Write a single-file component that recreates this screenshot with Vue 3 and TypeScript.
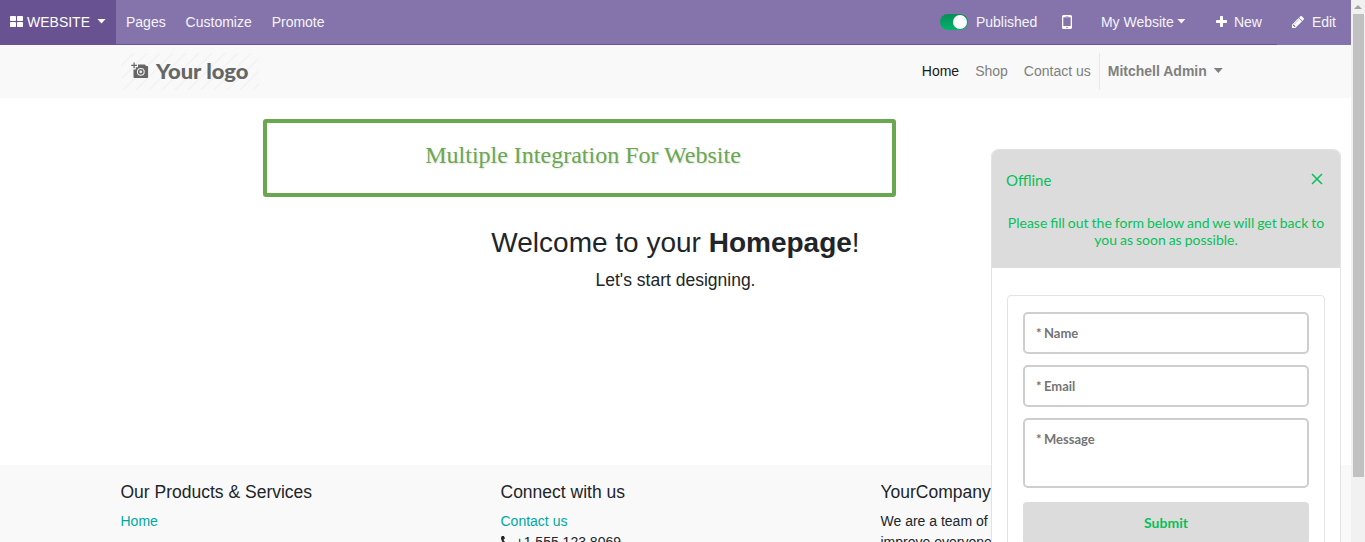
<script setup lang="ts">
const menu: string[] = ['Pages', 'Customize', 'Promote']
const fields: string[] = ['Name', 'Email']
</script>

<template>
  <div class="screen">
    <div class="page">
      <header class="topbar">
        <div class="brand">
          <svg class="grid-icon" viewBox="0 0 13 11"><rect width="6" height="5" rx=".8" /><rect x="7" width="6" height="5" rx=".8" /><rect y="6" width="6" height="5" rx=".8" /><rect x="7" y="6" width="6" height="5" rx=".8" /></svg>
          <span>WEBSITE</span><i class="caret"></i>
        </div>
        <a v-for="m in menu" :key="m" class="menu-item">{{ m }}</a>
        <div class="tools">
          <span class="switch"><i></i></span>
          <span class="published">Published</span>
          <svg class="mobile" viewBox="0 0 10 14"><path fill-rule="evenodd" d="M1.500 0h7Q10 0 10 1.500v11Q10 14 8.500 14h-7Q0 14 0 12.500v-11Q0 0 1.500 0zM1.300 2.300v8.700h7.400V2.300zM3.500 1v.5h3V1zM5 11.700a.8.8 0 1 0 0 1.600.8.8 0 0 0 0-1.600z" /></svg>
          <span class="site">My Website</span><i class="caret site-caret"></i>
          <svg class="plus" viewBox="192 128 1408 1408"><path d="M1600 736v192q0 40-28 68t-68 28h-416v416q0 40-28 68t-68 28h-192q-40 0-68-28t-28-68v-416h-416q-40 0-68-28t-28-68v-192q0-40 28-68t68-28h416v-416q0-40 28-68t68-28h192q40 0 68 28t28 68v416h416q40 0 68 28t28 68z" /></svg>
          <span class="new">New</span>
          <svg class="pencil" viewBox="128 149 1515 1515"><path d="M491 1536l91-91-235-235-91 91v107h128v128h107zm523-928q0-22-22-22-10 0-17 7l-542 542q-7 7-7 17 0 22 22 22 10 0 17-7l542-542q7-7 7-17zm-54-192l416 416-832 832h-416v-416zm683 96q0 53-37 90l-166 166-416-416 166-165q36-38 90-38 53 0 91 38l235 234q37 39 37 91z" /></svg>
          <span>Edit</span>
        </div>
        <i class="topbar-line"></i>
      </header>

      <nav class="navbar">
        <div class="container nav-row">
          <svg class="logo" viewBox="0 0 138 37">
            <defs><pattern id="stripes" width="13" height="13" patternUnits="userSpaceOnUse"><path d="M-3 3L3 -3M-1 14L14 -1M10 16L16 10" stroke="#f4f4f4" stroke-width="2" /></pattern></defs>
            <rect width="138" height="37" fill="url(#stripes)" />
            <path fill="#666" fill-rule="evenodd" d="M12.500 9.500h1.200v2.300H16V13h-2.300v2.300h-1.200V13h-2.300v-1.200h2.300zM17 11.500h7l1 1.600h1.200q.9 0 .9.900v10q0 .9-.9.900H13.400q-.9 0-.9-.9v-7.500h2.300v-2.300H17zM19.800 14.900a3.900 3.900 0 1 0 0 7.800 3.900 3.900 0 0 0 0-7.800zM19.800 15.900a2.900 2.900 0 1 1 0 5.800 2.900 2.900 0 0 1 0-5.800zM19.800 17.400a1.400 1.400 0 1 0 0 2.800 1.400 1.400 0 0 0 0-2.800z" />
            <text x="35" y="25.500" textLength="92.500" lengthAdjust="spacingAndGlyphs">Your logo</text>
          </svg>
          <div class="links">
            <a class="active">Home</a><a>Shop</a><a>Contact us</a>
            <div class="user">Mitchell Admin<i class="caret"></i></div>
          </div>
        </div>
      </nav>

      <main>
        <div class="banner">Multiple Integration For Website</div>
        <h1>Welcome to your <b>Homepage</b>!</h1>
        <p class="lead">Let's start designing.</p>
      </main>

      <footer>
        <div class="container columns">
          <section><h5>Our Products &amp; Services</h5><a>Home</a></section>
          <section>
            <h5>Connect with us</h5><a>Contact us</a>
            <div class="phone"><svg viewBox="192 256 1408 1280"><path d="M1600 1240q0 27-10 70.500t-21 68.500q-21 50-122 106-94 51-186 51-27 0-53-3.500t-57-12.500-47-14.500-55.500-20.500-49.500-18q-98-35-175-83-127-79-264-216t-216-264q-48-77-83-175-3-9-18-49.500t-20.500-55.500-14.500-47-12.500-57-3.500-53q0-92 51-186 56-101 106-122 25-11 68.500-21t70.500-10q14 0 21 3 18 6 53 76 11 19 30 54t35 63.500 31 53.500q3 4 17.500 25t21.500 35.500 7 28.500q0 20-28.500 50t-62 55-62 53-28.500 46q0 9 5 22.500t8.500 20.500 14 24 11.500 19q76 137 174 235t235 174q2 1 19 11.500t24 14 20.500 8.500 22.500 5q18 0 46-28.500t53-62 55-62 50-28.500q14 0 28.500 7t35.500 21.500 25 17.500q25 15 53.500 31t63.500 35 54 30q70 35 76 53 3 7 3 21z" /></svg>+1 555 123 8069</div>
          </section>
          <section><h5>YourCompany</h5><div>We are a team of</div><div>improve everyone</div></section>
        </div>
      </footer>

      <aside class="chat">
        <div class="chat-head">
          <div class="chat-title"><span>Offline</span><svg viewBox="0 0 12 12"><path d="M1 1l10 10M11 1L1 11" /></svg></div>
          <p>Please fill out the form below and we will get back to you as soon as possible.</p>
        </div>
        <div class="form">
          <div v-for="f in fields" :key="f" class="field">* {{ f }}</div>
          <div class="field message">* Message</div>
          <div class="submit">Submit</div>
        </div>
      </aside>
    </div>
    <div class="scrollbar">
      <svg viewBox="0 0 14 14"><path d="M3 9h8L7 5z" /></svg>
      <div class="thumb"></div>
    </div>
  </div>
</template>

<style>
body { margin: 0; overflow: hidden; background: #fff; }
</style>
<style scoped>
* { box-sizing: border-box; }
.screen { display: flex; width: 1365px; height: 542px; overflow: hidden; font: 14px/21px "Liberation Sans", Arial, sans-serif; color: #212529; }
.page { position: relative; width: 1351px; height: 542px; overflow: hidden; }
.caret { display: inline-block; width: 9px; height: 5px; background: currentColor; clip-path: polygon(0 0, 100% 0, 50% 100%); }
.topbar { position: relative; display: flex; align-items: stretch; height: 45px; line-height: 45px; background: #8474ab; color: #fff; }
.brand { display: flex; width: 116px; padding-left: 10px; background: #685292; align-items: center; }
.brand span { height: 45px; width: 63px; }
.brand .caret { margin: 0 0 3px 7px; }
.grid-icon { width: 13px; height: 11px; margin: 0 4px 2px 0; fill: #fff; }
.menu-item { padding: 0 9.900px 0 10px; color: #f6f4fa; }
.tools { display: flex; margin-left: auto; padding-right: 15px; align-items: center; height: 45px; color: #f6f4fa; }
.tools svg { fill: #fff; margin-bottom: 2px; }
.switch { display: flex; justify-content: flex-end; width: 28px; height: 16px; margin-bottom: 1px; padding: 1px; border-radius: 8px; background: linear-gradient(#078e57, #04b36c); }
.switch i { width: 14px; height: 14px; border-radius: 50%; background: #fff; }
.published { width: 62px; margin: 0 24px 0 8px; }
.tools .mobile { width: 10px; height: 14px; margin: 0 29px 1px 0; }
.site { width: 73px; white-space: nowrap; }
.site-caret { margin: 0 30px 3px 3px; }
.plus { width: 11px; height: 11px; margin-right: 7px; }
.new { width: 28px; margin-right: 30px; }
.tools .pencil { width: 12px; height: 12px; margin: 0 8px 1px 0; }
.topbar-line { position: absolute; left: 116px; bottom: 0; width: 1161px; height: 1px; background: #69539b; }
.navbar { height: 53px; background: #f9f9f9; }
.container { width: 1110px; margin-left: 120.5px; }
.nav-row { display: flex; justify-content: space-between; height: 53px; align-items: center; }
.logo { width: 138px; height: 37px; }
.logo text { font: 900 20px Lato, sans-serif; fill: #666; }
.links { display: flex; align-items: center; color: #808080; height: 37px; padding-right: 7.7px; }
.links a { margin-right: 16px; }
.links .active { color: #1a1a1a; }
.links a:nth-child(3) { margin-right: 8px; }
.user { display: flex; align-items: center; height: 37px; border-left: 1px solid #e9e9e9; padding-left: 8px; font-weight: bold; }
.user .caret { margin: 0 0 2px 7px; }
main { height: 367px; padding-top: 21px; }
.banner { width: 633px; height: 78px; margin-left: 263px; padding: 17px 0 0 7px; border: 4px solid #6aa84f; border-radius: 3px; color: #6aa84f; text-align: center; font: 24px/30px "Liberation Serif", serif; text-shadow: 1px 1px 2px #ddd; }
h1 { margin: 29px 0 0; font-size: 28px; line-height: 34px; font-weight: normal; text-align: center; }
.lead { margin: 7px 0 0; font-size: 17.5px; line-height: 26px; text-align: center; }
footer { height: 77px; padding-top: 17px; background: #f9f9f9; }
.columns { display: flex; }
.columns section { flex: 0 0 380px; }
h5 { margin: 0 0 8px; font-size: 17.5px; line-height: 21px; font-weight: normal; }
footer a { display: block; color: #00a8a4; }
.phone { display: flex; align-items: center; gap: 4px; }
.phone svg { width: 11px; height: 11px; margin-bottom: 2px; fill: #212529; }
.chat { position: absolute; left: 991px; top: 149px; width: 350px; height: 420px; border: 1px solid #e3e3e3; border-radius: 7px; background: #fff; overflow: hidden; font-family: Lato, sans-serif; }
.chat-head { height: 118px; background: #dcdcdc; color: #07c05a; padding: 19px 14px 0; }
.chat-title { display: flex; justify-content: space-between; font-size: 15px; line-height: 22px; }
.chat-title svg { width: 12px; height: 12px; margin: 4px 3px 0 0; fill: none; stroke: #07c05a; stroke-width: 1.5; }
.chat-head p { margin: 23px 0 0; text-align: center; font-size: 14px; line-height: 17px; word-spacing: -.62px; }
.form { width: 318px; height: 300px; margin: 27px 0 0 15px; padding: 16px 15px; border: 1px solid #e3e3e3; border-radius: 4px; }
.field { height: 42px; margin-bottom: 11px; padding: 9px 11px; border: 2px solid #cecece; border-radius: 5px; color: #757575; font-size: 13px; line-height: 20px; font-weight: bold; word-spacing: -.7px; }
.message { height: 70px; margin-bottom: 14px; }
.submit { height: 42px; border-radius: 4px; background: #dcdcdc; color: #07c05a; text-align: center; font-size: 14px; line-height: 42px; font-weight: bold; }
.scrollbar { width: 14px; height: 542px; background: #f1f1f1; }
.scrollbar svg { display: block; width: 14px; height: 14px; fill: #a3a3a3; }
.thumb { width: 11px; height: 463px; margin-left: 2px; background: #c1c1c1; }
</style>
